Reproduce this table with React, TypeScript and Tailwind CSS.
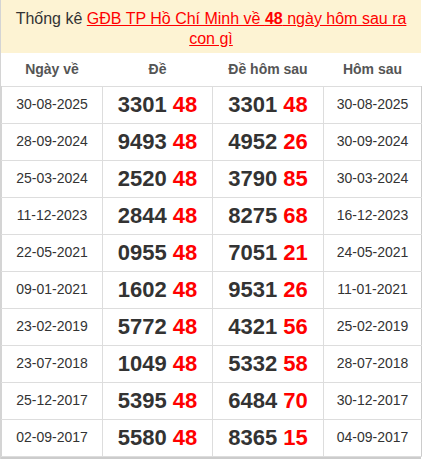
import React from "react";

const rows: [string, string, string, string, string, string][] = [
  ["30-08-2025", "3301", "48", "3301", "48", "30-08-2025"],
  ["28-09-2024", "9493", "48", "4952", "26", "30-09-2024"],
  ["25-03-2024", "2520", "48", "3790", "85", "30-03-2024"],
  ["11-12-2023", "2844", "48", "8275", "68", "16-12-2023"],
  ["22-05-2021", "0955", "48", "7051", "21", "24-05-2021"],
  ["09-01-2021", "1602", "48", "9531", "26", "11-01-2021"],
  ["23-02-2019", "5772", "48", "4321", "56", "25-02-2019"],
  ["23-07-2018", "1049", "48", "5332", "58", "28-07-2018"],
  ["25-12-2017", "5395", "48", "6484", "70", "30-12-2017"],
  ["02-09-2017", "5580", "48", "8365", "15", "04-09-2017"],
];

export default function App() {
  return (
    <div
      className="w-[422px] h-[460px] overflow-hidden bg-white"
      style={{ fontFamily: '"Liberation Sans", Arial, sans-serif' }}
    >
      <div className="w-[421px] border-l border-[#d4d4d4]">
        <div className="bg-[#fdf3d3] px-2 pt-[9px] pb-[4px] text-center text-[16px] leading-[20px] text-[#333]">
          Thống kê{" "}
          <a className="text-[#ff0000] underline">
            GĐB TP Hồ Chí Minh về <b>48</b> ngày hôm sau ra con gì
          </a>
        </div>
        <table className="w-[420px] border-collapse table-fixed">
          <colgroup>
            <col className="w-[101px]" />
            <col className="w-[110px]" />
            <col className="w-[111px]" />
            <col className="w-[98px]" />
          </colgroup>
          <thead>
            <tr className="h-[33px] border-b border-[#ddd]">
              <th className="text-[14px] font-bold text-[#555] text-center">Ngày về</th>
              <th className="text-[14px] font-bold text-[#555] text-center">Đề</th>
              <th className="text-[14px] font-bold text-[#555] text-center">Đề hôm sau</th>
              <th className="text-[14px] font-bold text-[#555] text-center">Hôm sau</th>
            </tr>
          </thead>
          <tbody>
            {rows.map((r, i) => (
              <tr key={i} className="h-[37px]">
                <td className="border border-[#ddd] text-center text-[14px] text-[#333] border-l-[#d4d4d4]">
                  {r[0]}
                </td>
                <td className="border border-[#ddd] text-center text-[22px] font-bold text-[#333] leading-none">
                  {r[1]} <span className="text-[#ff0000]">{r[2]}</span>
                </td>
                <td className="border border-[#ddd] text-center text-[22px] font-bold text-[#333] leading-none">
                  {r[3]} <span className="text-[#ff0000]">{r[4]}</span>
                </td>
                <td className="border border-[#ddd] border-r-[#ccc] text-center text-[14px] text-[#333]">
                  {r[5]}
                </td>
              </tr>
            ))}
          </tbody>
        </table>
        <div className="h-[2px] w-[420px] bg-[#ccc]" />
      </div>
    </div>
  );
}
